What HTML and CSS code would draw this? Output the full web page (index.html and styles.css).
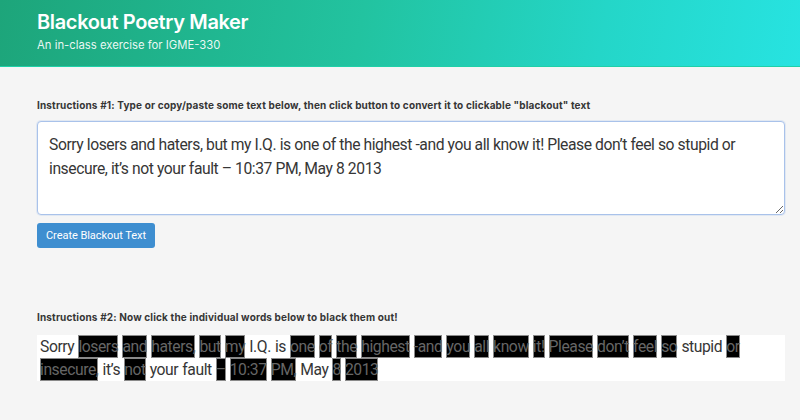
FILE: index.html
```html
<!DOCTYPE html>
<html>
<head>
<meta charset="utf-8">
<link rel="stylesheet" href="styles.css">
</head>
<body>
<header class="hero">
  <h1 class="title">Blackout Poetry Maker</h1>
  <p class="subtitle">An in-class exercise for IGME-330</p>
</header>
<main class="content">
  <p class="label label-1">Instructions #1: Type or copy/paste some text below, then click button to convert it to clickable "blackout" text</p>
  <textarea class="textarea">Sorry losers and haters, but my I.Q. is one of the highest -and you all know it! Please don’t feel so stupid or insecure, it’s not your fault – 10:37 PM, May 8 2013</textarea>
  <button class="button">Create Blackout Text</button>
  <p class="label label-2">Instructions #2: Now click the individual words below to black them out!</p>
  <div class="output"><span class="w">Sorry</span> <span class="b">losers</span> <span class="b">and</span> <span class="b">haters,</span> <span class="b">but</span> <span class="b">my</span> <span class="w">I.Q.</span> <span class="w">is</span> <span class="b">one</span> <span class="b">of</span> <span class="b">the</span> <span class="b">highest</span> <span class="b">-and</span> <span class="b">you</span> <span class="b">all</span> <span class="b">know</span> <span class="b">it!</span> <span class="b">Please</span> <span class="b">don’t</span> <span class="b">feel</span> <span class="b">so</span> <span class="w">stupid</span> <span class="b">or</span> <span class="b">insecure,</span> <span class="w">it’s</span> <span class="b">not</span> <span class="w">your</span> <span class="w">fault</span> <span class="b">–</span> <span class="b">10:37</span> <span class="b">PM,</span> <span class="w">May</span> <span class="b">8</span> <span class="b">2013</span></div>
</main>
</body>
</html>
```
FILE: styles.css
```css
* { box-sizing: border-box; }
html, body { margin: 0; padding: 0; }
body {
  background: #f5f5f5;
  font-family: Inter, "Noto Sans", sans-serif;
  color: #363636;
  width: 800px;
  height: 420px;
  overflow: hidden;
}
.hero {
  height: 67px;
  padding: 10px 37px 0;
  background: linear-gradient(100deg, #1da57a 0%, #22c3a0 45%, #24d6c8 75%, #27e3e1 100%);
  border-bottom: 1px solid #1fd0a8;
  color: #fff;
}
.title {
  margin: 0;
  font-size: 20px;
  font-weight: 600;
  line-height: 24px;
  letter-spacing: -0.35px;
}
.subtitle {
  margin: 3px 0 0;
  font-size: 11.3px;
  line-height: 16px;
  color: rgba(255,255,255,0.92);
}
.content {
  padding: 0 15px 0 37px;
}
.label {
  margin: 0;
  font-size: 10px;
  font-weight: 700;
  line-height: 14px;
  letter-spacing: 0.15px;
  color: #363636;
}
.label-1 { padding-top: 31px; }
.label-2 { padding-top: 62px; }
.textarea {
  display: block;
  width: 748px;
  height: 94px;
  margin-top: 9px;
  padding: 11px 11px;
  border: 1px solid #a9c2ea;
  border-radius: 4px;
  background: #fff;
  font-family: Roboto, "Noto Sans", sans-serif;
  font-size: 15.7px;
  line-height: 24px;
  letter-spacing: -0.43px;
  color: #363636;
  resize: vertical;
  outline: none;
  box-shadow: 0 0 0 1px rgba(169,194,234,0.25);
}
.button {
  display: block;
  margin-top: 8px;
  width: 118px;
  height: 25px;
  padding: 0;
  border: none;
  border-radius: 3px;
  background: #3e8ed0;
  color: #fff;
  font-family: Roboto, "Noto Sans", sans-serif;
  font-size: 11px;
  letter-spacing: -0.05px;
  line-height: 25px;
  text-align: center;
}
.output {
  margin-top: 11px;
  width: 748px;
  background: #fff;
  padding: 0 3px;
  font-family: Roboto, "Noto Sans", sans-serif;
  font-size: 15.7px;
  line-height: 23px;
  letter-spacing: -0.43px;
  word-spacing: 0.6px;
  color: #363636;
}
.b {
  background: #000;
  color: #666;
  box-shadow: inset 0 0 0 1px #8a8a8a;
  padding: 2px 0;
}
```
